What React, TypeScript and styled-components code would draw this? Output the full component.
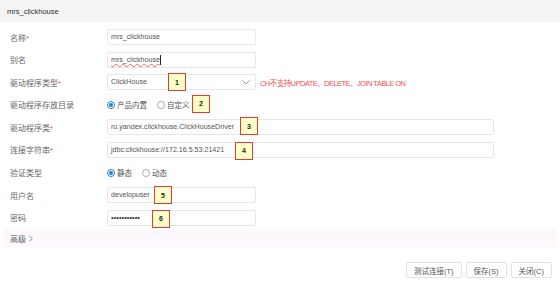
import React from "react";
import styled, { createGlobalStyle } from "styled-components";

const Global = createGlobalStyle`
  html, body { margin: 0; padding: 0; background: #fff; }
  body { font-family: "Liberation Sans", "Noto Sans CJK SC", sans-serif; font-size: 8px; color: #555; }
`;

const Dialog = styled.div`
  width: 560px;
  height: 286px;
  display: flex;
  flex-direction: column;
  background: #fff;
  overflow: hidden;
`;

const Header = styled.div`
  height: 22px;
  background: #f4f4f4;
  display: flex;
  align-items: center;
  padding-left: 7px;
  color: #333;
  font-size: 7.5px;
  flex-shrink: 0;
`;

const Body = styled.div`
  display: flex;
  flex-direction: column;
  gap: 6.6px;
  padding: 7px 4px 0;
`;

const Row = styled.div`
  position: relative;
  display: flex;
  align-items: center;
  height: 16px;
  padding-left: 6px;
`;

const Label = styled.div`
  width: 97px;
  flex-shrink: 0;
  color: #666;
  white-space: nowrap;
`;

const Req = styled.span`
  color: #f0506e;
`;

const Field = styled.div<{ $wide?: boolean; $tint?: boolean }>`
  box-sizing: border-box;
  width: ${(p) => (p.$wide ? "387px" : "149px")};
  height: 16px;
  border: 1px solid ${(p) => (p.$tint ? "#efe6ee" : "#e6e6e6")};
  border-radius: 2px;
  padding-left: 3px;
  display: flex;
  align-items: center;
  color: #555;
  font-size: 7.1px;
  white-space: nowrap;
  position: relative;
  background: #fff;
`;

const Typed = styled.span`
  text-decoration: underline wavy #e06a6a;
  text-decoration-thickness: 1px;
  text-underline-offset: 1px;
`;

const Caret = styled.span`
  display: inline-block;
  width: 1px;
  height: 10px;
  background: #222;
  margin-left: 0.5px;
`;

const Dots = styled.span`
  font-size: 7.5px;
  color: #333;
`;

const Chevron = styled.svg`
  position: absolute;
  right: 5px;
  top: 5px;
`;

const Note = styled.div`
  margin-left: 4px;
  color: #f5524f;
  font-size: 7.5px;
  letter-spacing: -0.55px;
  white-space: nowrap;
`;

const Badge = styled.div<{ $x: number; $y: number }>`
  position: absolute;
  left: ${(p) => p.$x}px;
  top: ${(p) => p.$y}px;
  box-sizing: border-box;
  width: 18px;
  height: 18px;
  background: #ffffc8;
  border: 1.5px solid #e53935;
  display: flex;
  align-items: center;
  justify-content: center;
  font-size: 7px;
  font-weight: bold;
  color: #222;
  z-index: 2;
`;

const RadioGroup = styled.div`
  display: flex;
  align-items: center;
  gap: 10px;
`;

const RadioItem = styled.label`
  display: flex;
  align-items: center;
  gap: 2px;
  color: #555;
  font-size: 7.5px;
`;

const RadioCircle = styled.span<{ $on?: boolean }>`
  box-sizing: border-box;
  width: 8px;
  height: 8px;
  border-radius: 50%;
  border: 1px solid ${(p) => (p.$on ? "#1f7fe0" : "#aaa")};
  display: flex;
  align-items: center;
  justify-content: center;
  &::after {
    content: "";
    width: 4px;
    height: 4px;
    border-radius: 50%;
    background: ${(p) => (p.$on ? "#1f7fe0" : "transparent")};
  }
`;

const Advanced = styled.div`
  margin-top: -3px;
  height: 18px;
  background: #fcf8fc;
  display: flex;
  align-items: center;
  padding-left: 6px;
  color: #666;
  gap: 2px;
`;

const Footer = styled.div`
  margin-top: auto;
  display: flex;
  justify-content: flex-end;
  gap: 4px;
  padding: 0 8px 8px 0;
`;

const Button = styled.button`
  box-sizing: border-box;
  height: 16px;
  padding: 0 7px;
  background: #fff;
  border: 1px solid #e2e2e2;
  border-radius: 2px;
  font-family: inherit;
  font-size: 7.5px;
  color: #555;
  display: flex;
  align-items: center;
`;

const Radio = ({ on, children }: { on?: boolean; children: React.ReactNode }) => (
  <RadioItem>
    <RadioCircle $on={on} />
    {children}
  </RadioItem>
);

export default function App() {
  return (
    <Dialog>
      <Global />
      <Header>mrs_clickhouse</Header>
      <Body>
        <Row>
          <Label>名称<Req>*</Req></Label>
          <Field $tint>mrs_clickhouse</Field>
        </Row>
        <Row>
          <Label>别名</Label>
          <Field>
            <Typed>mrs_clickhouse</Typed>
            <Caret />
          </Field>
        </Row>
        <Row>
          <Label>驱动程序类型<Req>*</Req></Label>
          <Field>
            ClickHouse
            <Chevron width="8" height="5" viewBox="0 0 8 5">
              <path d="M0.5 0.5 L4 4 L7.5 0.5" fill="none" stroke="#888" strokeWidth="0.9" />
            </Chevron>
          </Field>
          <Note>CH不支持UPDATE、DELETE、JOIN TABLE ON</Note>
          <Badge $x={164} $y={-1}>1</Badge>
        </Row>
        <Row>
          <Label>驱动程序存放目录</Label>
          <RadioGroup>
            <Radio on>产品内置</Radio>
            <Radio>自定义</Radio>
          </RadioGroup>
          <Badge $x={188} $y={-2}>2</Badge>
        </Row>
        <Row>
          <Label>驱动程序类<Req>*</Req></Label>
          <Field $wide>ru.yandex.clickhouse.ClickHouseDriver</Field>
          <Badge $x={236} $y={-2}>3</Badge>
        </Row>
        <Row>
          <Label>连接字符串<Req>*</Req></Label>
          <Field $wide>jdbc:clickhouse://172.16.5.53:21421</Field>
          <Badge $x={231} $y={0}>4</Badge>
        </Row>
        <Row>
          <Label>验证类型</Label>
          <RadioGroup>
            <Radio on>静态</Radio>
            <Radio>动态</Radio>
          </RadioGroup>
        </Row>
        <Row>
          <Label>用户名</Label>
          <Field>developuser</Field>
          <Badge $x={150} $y={-1}>5</Badge>
        </Row>
        <Row>
          <Label>密码</Label>
          <Field>
            <Dots>•••••••••••</Dots>
          </Field>
          <Badge $x={148} $y={0}>6</Badge>
        </Row>
        <Advanced>
          高级
          <svg width="6" height="7" viewBox="0 0 6 7">
            <path d="M1.5 0.8 L4.2 3.5 L1.5 6.2" fill="none" stroke="#777" strokeWidth="0.9" />
          </svg>
        </Advanced>
      </Body>
      <Footer>
        <Button>测试连接(T)</Button>
        <Button>保存(S)</Button>
        <Button>关闭(C)</Button>
      </Footer>
    </Dialog>
  );
}
